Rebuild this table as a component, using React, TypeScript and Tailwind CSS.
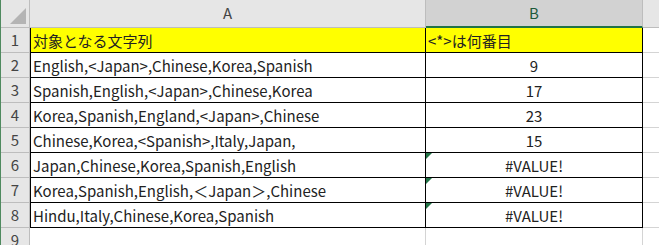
import React from "react";

const rows: { a: string; b: string; err?: boolean; head?: boolean }[] = [
  { a: "対象となる文字列", b: "<*>は何番目", head: true },
  { a: "English,<Japan>,Chinese,Korea,Spanish", b: "9" },
  { a: "Spanish,English,<Japan>,Chinese,Korea", b: "17" },
  { a: "Korea,Spanish,England,<Japan>,Chinese", b: "23" },
  { a: "Chinese,Korea,<Spanish>,Italy,Japan,", b: "15" },
  { a: "Japan,Chinese,Korea,Spanish,English", b: "#VALUE!", err: true },
  { a: "Korea,Spanish,English,＜Japan＞,Chinese", b: "#VALUE!", err: true },
  { a: "Hindu,Italy,Chinese,Korea,Spanish", b: "#VALUE!", err: true },
];

export default function App() {
  const font = { fontFamily: '"Noto Sans CJK JP", "Noto Sans", sans-serif' };
  return (
    <div
      className="w-[659px] h-[245px] overflow-hidden bg-white text-[#222] border-l border-[#4f8a5f]"
      style={font}
    >
      <div className="grid grid-cols-[29px_396px_217px_1fr] grid-rows-[28px_repeat(9,25px)]">
        {/* header row */}
        <div className="relative bg-[#e6e6e6] border-r border-b border-[#bdbdbd]">
          <div className="absolute right-[3px] bottom-[3px] w-0 h-0 border-l-[16px] border-l-transparent border-b-[16px] border-b-[#b4b4b4]" />
        </div>
        <div className="bg-[#e6e6e6] border-r border-b border-[#bdbdbd] flex items-center justify-center text-[15px] text-[#444]">
          A
        </div>
        <div className="bg-[#d2d2d2] border-r border-[#bdbdbd] border-b-2 border-b-[#217346] flex items-center justify-center text-[15px] text-[#1e5a3a]">
          B
        </div>
        <div className="bg-[#e6e6e6] border-b border-[#bdbdbd]" />

        {rows.map((r, i) => (
          <React.Fragment key={i}>
            <div className="bg-[#e6e6e6] border-r border-b border-[#bdbdbd] flex items-center justify-center text-[15px] text-[#444]">
              {i + 1}
            </div>
            <div
              className={`border-l border-r border-b border-black flex items-center pl-[2px] text-[15px] leading-none whitespace-nowrap ${
                r.head ? "bg-[#ffff00]" : "bg-white"
              }`}
            >
              {r.a}
            </div>
            <div
              className={`relative border-r border-b border-black flex items-center text-[15px] leading-none whitespace-nowrap ${
                r.head ? "bg-[#ffff00] justify-start pl-[2px]" : "bg-white justify-center"
              }`}
            >
              {r.err && (
                <div className="absolute left-0 top-0 w-0 h-0 border-t-[6px] border-t-[#217346] border-r-[6px] border-r-transparent" />
              )}
              {r.b}
            </div>
            <div className="bg-white border-b border-[#d4d4d4]" />
          </React.Fragment>
        ))}

        <div className="bg-[#e6e6e6] border-r border-b border-[#bdbdbd] flex items-center justify-center text-[15px] text-[#444]">
          9
        </div>
        <div className="bg-white border-r border-b border-[#d4d4d4]" />
        <div className="bg-white border-r border-b border-[#d4d4d4]" />
        <div className="bg-white border-b border-[#d4d4d4]" />
      </div>
    </div>
  );
}
